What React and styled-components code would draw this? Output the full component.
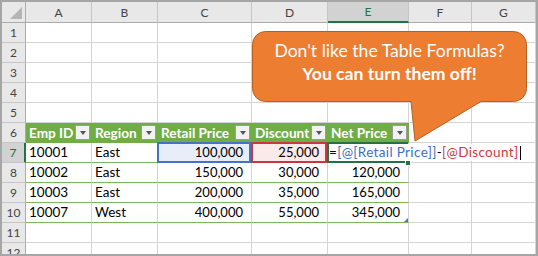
import React from "react";
import styled, { createGlobalStyle, css } from "styled-components";

const GREEN = "#217346";
const TABLE_GREEN = "#70ad47";
const ROW_RULE = "#7db65a";
const GRID = "#d4d4d4";

const COLS = ["A", "B", "C", "D", "E", "F", "G"];
const HEADERS = ["Emp ID", "Region", "Retail Price", "Discount", "Net Price"];
const ROWS = {
  7: ["10001", "East", "100,000", "25,000", null],
  8: ["10002", "East", "150,000", "30,000", "120,000"],
  9: ["10003", "East", "200,000", "35,000", "165,000"],
  10: ["10007", "West", "400,000", "55,000", "345,000"],
};

const GlobalStyle = createGlobalStyle`
  html, body { margin: 0; padding: 0; background: #fff; }
  body { font-family: Lato, "Open Sans", sans-serif; }
  * { box-sizing: border-box; }
`;

const Frame = styled.div`
  position: relative;
  width: 538px;
  height: 256px;
  border: 2px solid #a6a6a6;
  overflow: hidden;
  background: #fff;
`;

const Sheet = styled.div`
  display: grid;
  grid-template-columns: 24px 66px 66px 94px 76px 81px 63px 64px;
  grid-template-rows: 21px repeat(12, 20px);
  font-family: Lato, sans-serif;
  font-size: 13px;
  color: #000;
`;

const Corner = styled.div`
  background: #e8e8e8;
  border-right: 1px solid #ababab;
  border-bottom: 1px solid #ababab;
  display: flex;
  align-items: flex-end;
  justify-content: flex-end;
  padding: 0 3px 3px 0;
`;

const CornerMark = styled.span`
  width: 0;
  height: 0;
  border-style: solid;
  border-width: 0 0 12px 12px;
  border-color: transparent transparent #b5b5b5 transparent;
`;

const ColHead = styled.div`
  background: ${(p) => (p.$active ? "#d2d2d2" : "#e8e8e8")};
  color: ${(p) => (p.$active ? GREEN : "#444")};
  border-right: 1px solid #c6c6c6;
  border-bottom: ${(p) => (p.$active ? `2px solid ${GREEN}` : "1px solid #ababab")};
  display: flex;
  align-items: center;
  justify-content: center;
  font-size: 12px;
`;

const RowHead = styled.div`
  background: ${(p) => (p.$active ? "#d2d2d2" : "#e8e8e8")};
  color: ${(p) => (p.$active ? GREEN : "#444")};
  border-right: ${(p) => (p.$active ? `2px solid ${GREEN}` : "1px solid #ababab")};
  border-bottom: 1px solid #c6c6c6;
  display: flex;
  align-items: center;
  justify-content: center;
  font-size: 12px;
`;

const Cell = styled.div`
  position: relative;
  border-right: 1px solid ${GRID};
  border-bottom: 1px solid ${(p) => p.$rule || GRID};
  background: ${(p) => p.$fill || "#fff"};
  padding: 0 8px 0 3px;
  line-height: 19px;
  text-align: ${(p) => (p.$num ? "right" : "left")};
  white-space: nowrap;
  ${(p) => p.$wide && css`font-size: 13.5px;`}
  ${(p) => p.$editing && css`z-index: 2;`}
  ${(p) =>
    p.$mark &&
    css`
      &::after {
        content: "";
        position: absolute;
        top: -1px;
        left: -1px;
        right: 0;
        bottom: -1px;
        border: 2px solid ${p.$mark};
        z-index: ${p.$editing ? 0 : 3};
        pointer-events: none;
      }
    `}
`;

const HeadCell = styled.div`
  display: flex;
  align-items: center;
  justify-content: space-between;
  background: ${TABLE_GREEN};
  color: #fff;
  font-weight: 700;
  font-size: 13.6px;
  padding: 0 1px 0 3px;
  border-right: 1px solid ${TABLE_GREEN};
  border-bottom: 1px solid ${TABLE_GREEN};
  white-space: nowrap;
  overflow: hidden;
`;

const FilterButton = styled.span`
  flex: none;
  width: 15px;
  height: 15px;
  border: 1px solid #9a9a9a;
  background: #f2f2f2;
  display: flex;
  align-items: center;
  justify-content: center;
`;

const Caret = styled.span`
  width: 0;
  height: 0;
  border-left: 3.5px solid transparent;
  border-right: 3.5px solid transparent;
  border-top: 4px solid #555;
`;

const Editor = styled.div`
  position: absolute;
  left: 1px;
  top: 1px;
  bottom: 1px;
  padding: 0 4px 0 0;
  background: #fff;
  white-space: nowrap;
  display: flex;
  align-items: center;
  font-size: 13.5px;
  letter-spacing: 0.35px;
  z-index: 1;
`;

const Ref = styled.span`
  color: ${(p) => p.$color};
`;

const TextCursor = styled.span`
  display: inline-block;
  width: 1px;
  height: 14px;
  margin-left: 2px;
  background: #000;
`;

const FillHandle = styled.span`
  position: absolute;
  right: -3px;
  bottom: -4px;
  width: 6px;
  height: 6px;
  background: ${GREEN};
  border: 1px solid #fff;
  z-index: 4;
`;

const ResizeMark = styled.span`
  position: absolute;
  right: 0;
  bottom: 0;
  width: 0;
  height: 0;
  border-left: 4px solid transparent;
  border-bottom: 4px solid #4472c4;
`;

const Bubble = styled.div`
  position: absolute;
  left: 248px;
  top: 27px;
  width: 280px;
  height: 116px;
  z-index: 10;
  pointer-events: none;
`;

const BubbleShape = styled.svg`
  position: absolute;
  left: 0;
  top: 0;
`;

const BubbleText = styled.div`
  position: absolute;
  left: 2.5px;
  top: 2.5px;
  width: 274px;
  padding-top: 7px;
  text-align: center;
  color: #fff;
  font-family: Lato, sans-serif;
  font-size: 17.6px;
  line-height: 23px;
`;

const Strong = styled.div`
  font-weight: 700;
`;

function Callout() {
  return (
    <Bubble>
      <BubbleShape width="280" height="116" viewBox="0 0 280 116">
        <path
          d="M15.5 2.5 H263.5 A13 13 0 0 1 276.5 15.5 V59.5 A13 13 0 0 1 263.5 72.5 H231 L165 112 L161 72.5 H15.5 A13 13 0 0 1 2.5 59.5 V15.5 A13 13 0 0 1 15.5 2.5 Z"
          fill="#ed7d31"
          stroke="#b5601f"
          strokeWidth="1"
        />
      </BubbleShape>
      <BubbleText>
        <div>Don't like the Table Formulas?</div>
        <Strong>You can turn them off!</Strong>
      </BubbleText>
    </Bubble>
  );
}

function renderCell(r, ci) {
  const key = `${r}-${ci}`;
  if (r === 6 && ci < 5) {
    return (
      <HeadCell key={key}>
        <span>{HEADERS[ci]}</span>
        <FilterButton>
          <Caret />
        </FilterButton>
      </HeadCell>
    );
  }
  const row = ROWS[r];
  if (row && ci < 5) {
    const num = ci >= 2;
    if (r === 7 && ci === 2) {
      return (
        <Cell key={key} $rule={ROW_RULE} $num $fill="#e7eef9" $mark="#4472c4">
          {row[ci]}
        </Cell>
      );
    }
    if (r === 7 && ci === 3) {
      return (
        <Cell key={key} $rule={ROW_RULE} $num $fill="#fbeaea" $mark="#c8373d">
          {row[ci]}
        </Cell>
      );
    }
    if (r === 7 && ci === 4) {
      return (
        <Cell key={key} $rule={ROW_RULE} $mark={GREEN} $editing>
          <Editor>
            =<Ref $color="#3a6fc4">[@[Retail Price]]</Ref>-<Ref $color="#d03a3a">[@Discount]</Ref>
            <TextCursor />
          </Editor>
          <FillHandle />
        </Cell>
      );
    }
    return (
      <Cell key={key} $rule={ROW_RULE} $num={num} $wide={!num}>
        {row[ci]}
        {r === 10 && ci === 4 && <ResizeMark />}
      </Cell>
    );
  }
  return <Cell key={key} />;
}

export default function App() {
  return (
    <>
      <GlobalStyle />
      <Frame>
        <Sheet>
          <Corner>
            <CornerMark />
          </Corner>
          {COLS.map((c) => (
            <ColHead key={c} $active={c === "E"}>
              {c}
            </ColHead>
          ))}
          {Array.from({ length: 12 }, (_, i) => i + 1).map((r) => (
            <React.Fragment key={r}>
              <RowHead $active={r === 7}>{r}</RowHead>
              {COLS.map((_, ci) => renderCell(r, ci))}
            </React.Fragment>
          ))}
        </Sheet>
        <Callout />
      </Frame>
    </>
  );
}
